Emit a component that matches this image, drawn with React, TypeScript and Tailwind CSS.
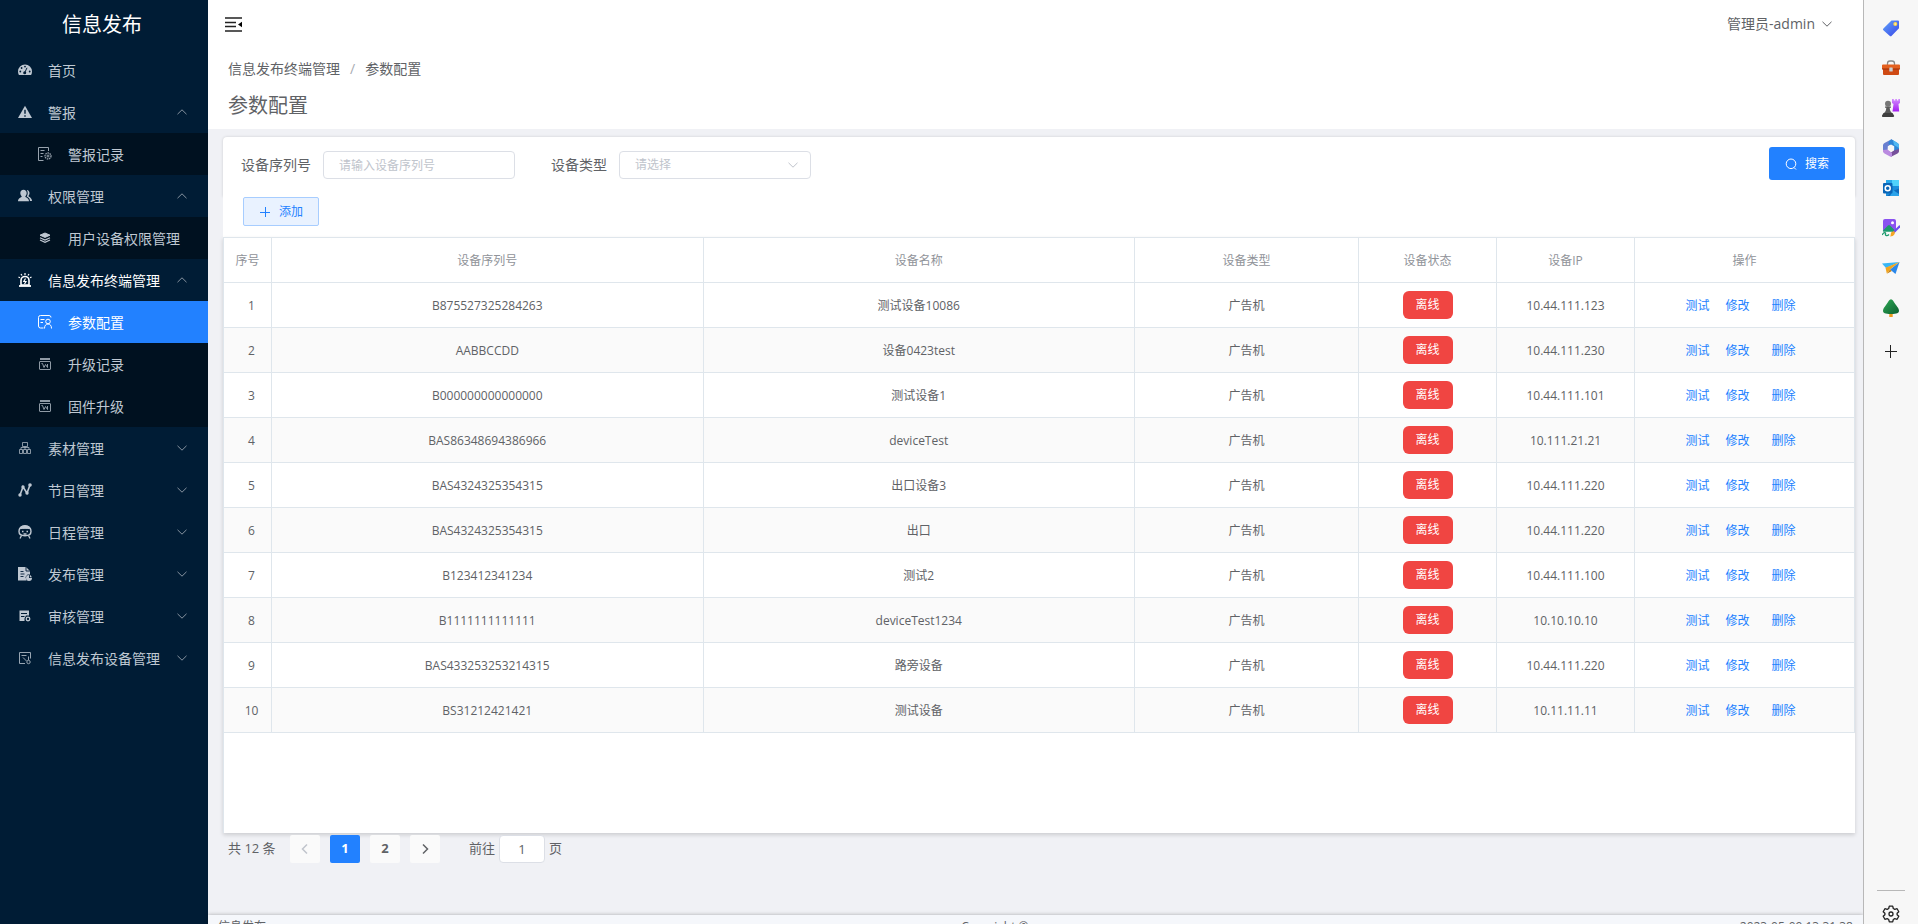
import { useState } from 'react'
import type { ReactNode } from 'react'

type SubItem = { label: string; icon: ReactNode; active?: boolean }
type MenuItem = { label: string; icon: ReactNode; active?: boolean; open?: boolean; leaf?: boolean; children?: SubItem[] }

type Device = { sn: string; name: string; ip: string }

const devices: Device[] = [
  { sn: 'B875527325284263', name: '测试设备10086', ip: '10.44.111.123' },
  { sn: 'AABBCCDD', name: '设备0423test', ip: '10.44.111.230' },
  { sn: 'B000000000000000', name: '测试设备1', ip: '10.44.111.101' },
  { sn: 'BAS86348694386966', name: 'deviceTest', ip: '10.111.21.21' },
  { sn: 'BAS4324325354315', name: '出口设备3', ip: '10.44.111.220' },
  { sn: 'BAS4324325354315', name: '出口', ip: '10.44.111.220' },
  { sn: 'B123412341234', name: '测试2', ip: '10.44.111.100' },
  { sn: 'B1111111111111', name: 'deviceTest1234', ip: '10.10.10.10' },
  { sn: 'BAS433253253214315', name: '路旁设备', ip: '10.44.111.220' },
  { sn: 'BS31212421421', name: '测试设备', ip: '10.11.11.11' },
]

function Glyph({ children }: { children: ReactNode }) {
  return (
    <svg viewBox="0 0 14 14" className="size-3.5 shrink-0" fill="none" stroke="currentColor" aria-hidden="true">
      {children}
    </svg>
  )
}

function Chevron({ up, className }: { up?: boolean; className?: string }) {
  return (
    <svg viewBox="0 0 12 12" className={className} fill="none" stroke="currentColor" aria-hidden="true">
      <path d={up ? 'M1.5 8.2 6 3.8l4.5 4.4' : 'M1.5 3.8 6 8.2l4.5-4.4'} />
    </svg>
  )
}

const upgradeIcon = (
  <Glyph>
    <g opacity=".75">
      <path d="M2 2h10" strokeWidth="2" />
      <rect x="1.5" y="4.5" width="11" height="8" rx=".5" />
      <path d="M3.500 6.500h1l1.500 4 1.500-3 2 3V7" />
    </g>
  </Glyph>
)

const menu: MenuItem[] = [
  {
    label: '首页',
    leaf: true,
    icon: (
      <Glyph>
        <path d="M7 1.5a7 7 0 0 0-7 7c0 1.3.3 2.5.9 3.5h12.2a7 7 0 0 0 .9-3.5 7 7 0 0 0-7-7z" fill="currentColor" stroke="none" />
        <g fill="#001c35" stroke="none">
          <circle cx="2.3" cy="8.5" r=".9" />
          <circle cx="3.6" cy="5" r=".9" />
          <circle cx="7" cy="3.6" r=".9" />
          <circle cx="11.7" cy="8.5" r=".9" />
          <circle cx="6.7" cy="9.8" r="1.5" />
        </g>
        <path d="M6.8 9.5 9 4.8" stroke="#001c35" />
      </Glyph>
    ),
  },
  {
    label: '警报',
    open: true,
    icon: (
      <Glyph>
        <path d="M7 .8 14 13H0z" fill="currentColor" stroke="none" />
        <path d="M7 4.8v4M7 10.2v1.5" stroke="#001c35" strokeWidth="1.4" />
      </Glyph>
    ),
    children: [
      {
        label: '警报记录',
        icon: (
          <Glyph>
            <g opacity=".8">
              <path d="M5.5 13.500H.5V.5h10v3.500M2.5 3.500h4M2.5 6.500h3M2.5 9.500h2" />
              <circle cx="10" cy="9" r="3" strokeDasharray="1.5 .7" strokeWidth="1.3" />
              <circle cx="10" cy="9" r="1" />
            </g>
          </Glyph>
        ),
      },
    ],
  },
  {
    label: '权限管理',
    open: true,
    icon: (
      <Glyph>
        <g fill="currentColor" stroke="none">
          <path d="M5.5.7c2 0 3.200 1.400 3.200 3.300 0 1.500-.7 2.700-1.500 3.400.2 1 3.800 1.300 3.800 4.900H0c0-3.600 3.600-3.900 3.800-4.900C3 6.700 2.300 5.500 2.300 4 2.300 2.100 3.500.7 5.500.7z" />
          <path d="M8.800.9c1.700.1 2.700 1.400 2.700 3.100 0 1.300-.5 2.300-1.200 3 .4 1 3.700 1.600 3.700 5h-2c0-2.800-1.800-3.700-3.300-4.500 1.300-2 1.400-4.800.1-6.600z" />
        </g>
      </Glyph>
    ),
    children: [
      {
        label: '用户设备权限管理',
        icon: (
          <Glyph>
            <path d="M7 2l5 2.200-5 2.200-5-2.200z" fill="currentColor" />
            <path d="M2 6.700l5 2.300 5-2.300M2 9l5 2.300L12 9" strokeWidth="1.2" />
          </Glyph>
        ),
      },
    ],
  },
  {
    label: '信息发布终端管理',
    open: true,
    active: true,
    icon: (
      <Glyph>
        <path d="M1 13h12" strokeWidth="1.8" />
        <path d="M3 12V7.500a4 4 0 0 1 8 0V12z" strokeWidth="1.6" />
        <path d="M7.500 5.500 5.800 8.500H8l-1.500 2.500M7 0v2M3 1l1 1.500M11 1l-1 1.500M.5 4l1.500.8M13.500 4l-1.500.8" strokeWidth="1.2" />
      </Glyph>
    ),
    children: [
      {
        label: '参数配置',
        active: true,
        icon: (
          <Glyph>
            <path d="M5.5 13h-3a2 2 0 0 1-2-2V2.500a2 2 0 0 1 2-2H11a2 2 0 0 1 2 2M2.500 4.500h4M2.500 7.500H5" />
            <circle cx="10" cy="6.500" r="2.300" />
            <path d="M6.500 13.500c0-3 1.500-4.500 3.500-4.500s3.500 1.500 3.500 4.500" />
          </Glyph>
        ),
      },
      { label: '升级记录', icon: upgradeIcon },
      { label: '固件升级', icon: upgradeIcon },
    ],
  },
  {
    label: '素材管理',
    icon: (
      <Glyph>
        <g opacity=".7">
          <path d="M4.500 1.500h5v4h-5zM1.500 8.500h3v4h-3zM5.500 8.500h3v4h-3zM9.500 8.500h3v4h-3zM7 5.500v3M3 8.500v-2h8v2" />
        </g>
      </Glyph>
    ),
  },
  {
    label: '节目管理',
    icon: (
      <Glyph>
        <path d="M2 12 5 4l4 6 3-8" strokeWidth="1.6" />
        <g fill="currentColor" stroke="none">
          <circle cx="2" cy="12" r="1.700" />
          <circle cx="5" cy="4" r="1.700" />
          <circle cx="9" cy="10" r="1.700" />
          <circle cx="12" cy="2" r="1.800" />
        </g>
      </Glyph>
    ),
  },
  {
    label: '日程管理',
    icon: (
      <Glyph>
        <path d="M1 6.500C1 3 3.500.8 7 .8s6 2.200 6 5.700c0 2.500-2 4.200-6 4.200S1 9 1 6.500z" strokeWidth="1.400" />
        <path d="M1.500 3.800C2.500 1.500 4.500 1 7 1s4.500.5 5.500 2.800c-3-.6-8-.6-11 0z" fill="currentColor" />
        <path d="M4 6.500h1.500M8.500 6.500H10M5.500 9h3M3.500 10.500l-1.500 3M10.500 10.500l1.500 3" strokeWidth="1.300" />
      </Glyph>
    ),
  },
  {
    label: '发布管理',
    icon: (
      <Glyph>
        <path d="M0 0h8l4 4v3.500H9.500L7.500 10l1 3.500H0z" fill="currentColor" stroke="none" />
        <path d="M2.500 4.500h3M2.500 7h4M2.500 9.500h3M8 0v4h4" stroke="#001c35" strokeWidth=".9" />
        <path d="M11 8v3h3a3 3 0 1 1-3-3z" fill="currentColor" stroke="none" />
        <path d="M11.800 7.500v2.700H14z" fill="currentColor" stroke="none" />
      </Glyph>
    ),
  },
  {
    label: '审核管理',
    icon: (
      <Glyph>
        <path d="M1.500 1.500H11v5H8L6.500 9.500V12h-5z" fill="currentColor" stroke="none" />
        <path d="M3 4.500h6M3 7.500h3.500" stroke="#001c35" />
        <circle cx="10" cy="10" r="1.800" strokeWidth="1.300" />
      </Glyph>
    ),
  },
  {
    label: '信息发布设备管理',
    icon: (
      <Glyph>
        <g opacity=".8">
          <path d="M7 12.500H1.500v-11h11v6M3.500 4.500h5M5 6.500 8.500 10" />
          <circle cx="10.500" cy="11" r="1.700" />
          <path d="M10.500 9V5.500" />
        </g>
      </Glyph>
    ),
  },
]

function Sidebar() {
  return (
    <aside className="w-52 shrink-0 bg-[#001c35] text-[#bfc8d2]">
      <div className="flex h-[49px] items-center justify-center pt-px pr-1 text-xl text-white">信息发布</div>
      <nav>
        <ul>
          {menu.map((item) => (
            <li key={item.label}>
              <a
                href="#"
                className={`flex h-[42px] items-center pr-5 pl-[18px] text-sm ${item.active ? 'text-white' : ''}`}
              >
                {item.icon}
                <span className="flex-1 pt-px pl-4">{item.label}</span>
                {!item.leaf && <Chevron up={item.open} className="mb-px size-3 text-[#8793a0]" />}
              </a>
              {item.children && (
                <ul className="bg-[#001120]">
                  {item.children.map((sub) => (
                    <li key={sub.label}>
                      <a
                        href="#"
                        className={`flex h-[42px] items-center pl-[38px] text-sm ${
                          sub.active ? 'bg-[#2281ff] text-white' : ''
                        }`}
                      >
                        {sub.icon}
                        <span className="pt-px pl-4">{sub.label}</span>
                      </a>
                    </li>
                  ))}
                </ul>
              )}
            </li>
          ))}
        </ul>
      </nav>
    </aside>
  )
}

function TopBar() {
  return (
    <header className="bg-white">
      <div className="flex h-12 items-center justify-between pr-[30px] pl-[17px]">
        <button aria-label="收起菜单">
          <svg viewBox="0 0 17 15" className="h-[15px] w-[17px] text-[#222]" stroke="currentColor" aria-hidden="true">
            <path d="M0 1h17M0 5.500h11M0 9.500h11M0 14h17" strokeWidth="1.500" />
            <path d="M17 4.800v5.400l-4-2.700z" fill="#000" stroke="none" />
          </svg>
        </button>
        <button className="flex items-center gap-1.5 text-sm text-[#606266]">
          管理员-admin
          <Chevron className="size-3" />
        </button>
      </div>
      <div className="h-[81px] pt-2.5 pl-5 text-[#606266]">
        <nav className="flex gap-2.5 text-sm leading-[22px]" aria-label="breadcrumb">
          <a href="#">信息发布终端管理</a>
          <span className="text-[#a8abb2]">/</span>
          <span>参数配置</span>
        </nav>
        <h1 className="mt-3 text-xl leading-7">参数配置</h1>
      </div>
    </header>
  )
}

function SearchForm() {
  const [sn, setSn] = useState('')

  return (
    <form className="flex h-[60px] justify-between rounded-t-sm bg-white pt-2.5 pr-2.5 pl-[18px] shadow-[0_0_3px_rgba(0,0,0,0.15)]">
      <div className="flex h-9 items-center text-sm text-[#606266]">
        <label htmlFor="sn">设备序列号</label>
        <input
          id="sn"
          value={sn}
          onChange={(e) => setSn(e.target.value)}
          placeholder="请输入设备序列号"
          className="ml-3 h-7 w-48 rounded border border-[#dcdfe6] px-[15px] text-xs outline-none placeholder:text-[#c0c4cc]"
        />
        <label htmlFor="type" className="ml-9">
          设备类型
        </label>
        <div className="relative ml-3">
          <select
            id="type"
            className="block h-7 w-48 appearance-none rounded border border-[#dcdfe6] bg-white px-[15px] text-xs text-[#c0c4cc] outline-none"
          >
            <option>请选择</option>
          </select>
          <Chevron className="pointer-events-none absolute top-2 right-3 size-3 text-[#c0c4cc]" />
        </div>
      </div>
      <button
        type="button"
        className="flex h-[33px] w-[76px] items-center justify-center gap-2 rounded-[3px] bg-[#2281ff] text-xs text-white"
      >
        <svg viewBox="0 0 12 12" className="size-3" fill="none" stroke="currentColor" aria-hidden="true">
          <circle cx="6" cy="5.800" r="4.800" />
          <path d="M9 9.500l2 2" />
        </svg>
        搜索
      </button>
    </form>
  )
}

const thClass = 'border-r border-b border-[#dfe6ec] pt-px font-normal'
const tdClass = 'border-r border-b border-[#dfe6ec] pt-px'

function DeviceTable() {
  return (
    <div className="h-[calc(100vh-328px)] border-t border-l border-[#dfe6ec] bg-white shadow-[0_2px_4px_rgba(0,0,0,0.15)]">
      <table className="w-full table-fixed border-separate border-spacing-0 text-center text-xs text-[#606266]">
        <colgroup>
          <col className="w-12" />
          <col />
          <col />
          <col className="w-56" />
          <col className="w-[138px]" />
          <col className="w-[138px]" />
          <col className="w-[220px]" />
        </colgroup>
        <thead className="text-[#909399]">
          <tr className="h-[45px]">
            <th className={thClass}>序号</th>
            <th className={thClass}>设备序列号</th>
            <th className={thClass}>设备名称</th>
            <th className={thClass}>设备类型</th>
            <th className={thClass}>设备状态</th>
            <th className={thClass}>设备IP</th>
            <th className={thClass}>操作</th>
          </tr>
        </thead>
        <tbody>
          {devices.map((d, idx) => (
            <tr key={idx} className="h-[45px] even:bg-[#fafafa]">
              <td className={`${tdClass} pl-2`}>{idx + 1}</td>
              <td className={tdClass}>{d.sn}</td>
              <td className={tdClass}>{d.name}</td>
              <td className={tdClass}>广告机</td>
              <td className="border-r border-b border-[#dfe6ec]">
                <span className="inline-block h-7 w-[50px] rounded-md bg-[#f04542] align-middle leading-7 text-white">
                  离线
                </span>
              </td>
              <td className={tdClass}>{d.ip}</td>
              <td className={`${tdClass} pr-2 text-[#2281ff]`}>
                <button>测试</button>
                <button className="ml-4">修改</button>
                <button className="ml-[22px]">删除</button>
              </td>
            </tr>
          ))}
        </tbody>
      </table>
    </div>
  )
}

function Pagination() {
  return (
    <div className="mt-0.5 flex h-7 items-center pl-[5px] text-[13px] text-[#606266]">
      <span className="w-[62px]">共 12 条</span>
      <div className="flex gap-2.5 font-bold">
        <button aria-label="上一页" disabled className="flex h-7 w-[30px] items-center justify-center rounded-xs bg-[#fafafa] text-[#c0c4cc]">
          <svg viewBox="0 0 12 12" className="size-3" fill="none" stroke="currentColor" strokeWidth="1.5">
            <path d="M8 1.500 3.500 6 8 10.500" />
          </svg>
        </button>
        <button className="h-7 w-[30px] rounded-xs bg-[#2281ff] text-white">1</button>
        <button className="h-7 w-[30px] rounded-xs bg-[#fafafa]">2</button>
        <button aria-label="下一页" className="flex h-7 w-[30px] items-center justify-center rounded-xs bg-[#fafafa]">
          <svg viewBox="0 0 12 12" className="size-3" fill="none" stroke="currentColor" strokeWidth="1.5">
            <path d="M4 1.500 8.500 6 4 10.500" />
          </svg>
        </button>
      </div>
      <label htmlFor="page" className="ml-[29px]">
        前往
      </label>
      <input
        id="page"
        defaultValue="1"
        className="mx-1 h-7 w-[46px] rounded border border-[#dcdfe6] bg-white text-center outline-none"
      />
      <span>页</span>
    </div>
  )
}

// Right-hand strip of browser shortcuts
const shortcuts: { name: string; icon: ReactNode }[] = [
  {
    name: 'Shopping',
    icon: (
      <>
        <path d="M9.500 1.500H16a1 1 0 0 1 1 1v6.800l-7.300 7.400a1.500 1.500 0 0 1-2.100 0l-6.200-5.400a1.300 1.300 0 0 1 0-1.900z" fill="url(#tag)" />
        <circle cx="13.300" cy="5" r="2" fill="#ffd84d" />
        <circle cx="13.300" cy="5" r=".8" fill="#fff3c0" />
      </>
    ),
  },
  {
    name: 'Tools',
    icon: (
      <>
        <path d="M5.500 6V4.500A2.500 2.500 0 0 1 8 2h2a2.500 2.500 0 0 1 2.500 2.500V6" fill="none" stroke="#888" strokeWidth="1.300" />
        <path d="M1 10h16v5a1 1 0 0 1-1 1H2a1 1 0 0 1-1-1z" fill="#cf4a14" />
        <path d="M0 6.500a1 1 0 0 1 1-1h16a1 1 0 0 1 1 1V10H0z" fill="#e4601f" />
        <path d="M0 9.500h18v1H0z" fill="#9c2d08" />
        <rect x="7.300" y="8.500" width="3.400" height="4" rx=".6" fill="#c9cfd1" />
      </>
    ),
  },
  {
    name: 'Games',
    icon: (
      <>
        <path d="M10 0h1.800v1.600h1.500V0h1.600v1.600h1.400V0H18v4l-1.500 1 .7 7.500h-6.700l1-7.500L10 4z" fill="url(#rook)" />
        <circle cx="6" cy="4.700" r="3" fill="#777" />
        <path d="M3 7.500h6v1.300H7.700c.2 2.500.8 4.200 2.300 5.200H2c1.500-1 2.100-2.700 2.300-5.200H3z" fill="#5a5a5a" />
        <path d="M1.500 14h9l1.500 2.500a1 1 0 0 1-1 1.500H1a1 1 0 0 1-1-1.500z" fill="#3f3f3f" />
      </>
    ),
  },
  {
    name: 'Microsoft 365',
    icon: (
      <>
        <path d="M9.500.3 2.500 4A2.500 2.500 0 0 0 1 6.300v6L5.500 15 6 7.500 11.500 4z" fill="#6a7fd0" />
        <path d="M9.500.3 15.500 4A2.500 2.500 0 0 1 17 6.300v6L12 14V8L6.500 5C6.500 3 7.500 1.300 9.500.3z" fill="#2f86d6" />
        <path d="M11 1.200 15.500 4A2.500 2.500 0 0 1 17 6.300V9l-5-3z" fill="#4fb8f2" />
        <path d="M17 10v2.300a2.500 2.500 0 0 1-1.500 2.200L9 17.800 8 14l4-2.500z" fill="#77509a" />
        <path d="M1 11l5-.5 4 3.500v3.500a2 2 0 0 1-2 0l-5.500-3A2.500 2.500 0 0 1 1 12.300z" fill="#ba8be0" />
        <path d="M9 5.500 12.200 7.300v3.500L9 12.700l-3.200-1.900V7.300z" fill="#f7f7f7" />
      </>
    ),
  },
  {
    name: 'Outlook',
    icon: (
      <>
        <path d="M4 1h13v16H4z" fill="#1b8fdc" />
        <path d="M10 1h7v6h-7z" fill="#4fd3fb" />
        <path d="M4 1h6v6H4z" fill="#28a8ea" />
        <path d="M17 9.500V17H5l6-5z" fill="#0f6cbd" />
        <path d="M11 11l6 4v2H8z" fill="#2ba3ea" />
        <rect x="1" y="4" width="9.500" height="10.500" rx="1" fill="#0a66b8" />
        <circle cx="5.700" cy="9.200" r="2.500" fill="none" stroke="#fff" strokeWidth="1.500" />
      </>
    ),
  },
  {
    name: 'Image Creator',
    icon: (
      <>
        <rect x="1" y="0" width="13" height="13" rx="2" fill="#8a52f0" />
        <circle cx="10.500" cy="3.800" r="1.500" fill="#fff" />
        <path d="M1 11.500l5-5a1.500 1.500 0 0 1 2 0l5 5-1 1.500H2a1 1 0 0 1-1-1.500z" fill="#1c9a6c" />
        <path d="M0 12.700h10L7 18H0z" fill="#f7f7f7" />
        <path d="M0 16c2-3 4-3 3.500-1s2 2 3.500.5" fill="none" stroke="#1c9a6c" strokeWidth="1.300" />
        <path d="M17.500 7.500 12 13" stroke="#6a4df0" strokeWidth="2.200" strokeLinecap="round" />
        <path d="M12.500 12.500c1 1.500 0 5-4.500 5 1-1 .5-2 1-3.500.5-1.300 2.500-2.300 3.500-1.500z" fill="#f5a623" />
      </>
    ),
  },
  {
    name: 'Drop',
    icon: (
      <>
        <path d="M0 4.500 17.500 3 4 9z" fill="#38b6f5" />
        <path d="M17.500 3 13.500 15 8 10.500z" fill="#2a87ea" />
        <path d="M3.500 8.700 17.500 3 8 10.500 4.800 14.500z" fill="#f2a51c" />
        <path d="M8 10.500l1.800 1.400-5 2.900z" fill="#c87f0d" />
      </>
    ),
  },
  {
    name: 'E-tree',
    icon: (
      <>
        <path d="M7.300 13h3.400v5H7.300z" fill="#ee9a1d" />
        <path d="M9 .3c1.500 0 3 3 5 5.700 1.800 2.400 3 4 3 5.700C17 14 15 15 9 15s-8-1-8-3.300C1 10 2.200 8.400 4 6 6 3.300 7.500.3 9 .3z" fill="url(#tree)" />
      </>
    ),
  },
]

function ShortcutStrip() {
  return (
    <aside className="flex w-[55px] shrink-0 flex-col items-center border-l border-[#b8b8b8] bg-[#f7f7f7] pt-[19px]">
      <svg className="absolute size-0" aria-hidden="true">
        <defs>
          <linearGradient id="tag" x1="0" y1="0" x2="1" y2="1">
            <stop offset="0" stopColor="#5fa4fa" />
            <stop offset="1" stopColor="#3a46e8" />
          </linearGradient>
          <linearGradient id="rook" x1="0" y1="0" x2="0" y2="1">
            <stop offset="0" stopColor="#d28bff" />
            <stop offset="1" stopColor="#a21cf0" />
          </linearGradient>
          <linearGradient id="tree" x1="0" y1="0" x2="1" y2="1">
            <stop offset="0" stopColor="#2eaa55" />
            <stop offset="1" stopColor="#0d5f30" />
          </linearGradient>
        </defs>
      </svg>
      <div className="flex flex-col gap-[22px]">
        {shortcuts.map((s) => (
          <button key={s.name} aria-label={s.name}>
            <svg viewBox="0 0 18 18" className="block size-[18px]" aria-hidden="true">
              {s.icon}
            </svg>
          </button>
        ))}
        <button aria-label="Add" className="mt-[3px]">
          <svg viewBox="0 0 18 18" className="block size-[18px]" stroke="#222" aria-hidden="true">
            <path d="M3 9.500h12M8.500 3v13" />
          </svg>
        </button>
      </div>
      <div className="mt-auto border-t border-[#b8b8b8] px-[5px] pt-3.5 pb-px">
        <button aria-label="Settings" className="block">
          <svg viewBox="0 0 18 18" className="block size-[18px]" fill="none" stroke="#222" strokeWidth="1.3" aria-hidden="true">
            <path
              d="M7.300 1.200h3.400l.6 2.300 1.500.9 2.300-.7 1.700 3-1.700 1.600v1.400l1.700 1.600-1.700 3-2.300-.7-1.500.9-.6 2.300H7.300l-.6-2.300-1.500-.9-2.300.7-1.700-3 1.700-1.600V8.300L1.200 6.700l1.700-3 2.300.7 1.500-.9z"
              strokeLinejoin="round"
            />
            <circle cx="9" cy="9" r="2" />
          </svg>
        </button>
      </div>
    </aside>
  )
}

export default function App() {
  return (
    <div className="flex h-screen overflow-hidden bg-[#f0f1f5] font-['Open_Sans','Noto_Sans_CJK_SC',sans-serif]">
      <Sidebar />
      <div className="min-w-0 flex-1">
        <TopBar />
        <main className="mt-2 mr-2 ml-[15px]">
          <SearchForm />
          <div className="h-10 bg-white pl-5">
            <button className="flex h-[29px] w-[76px] items-center justify-center gap-2 rounded-xs border border-[#a7cdff] bg-[#e9f2ff] text-xs text-[#2281ff]">
              <svg viewBox="0 0 12 12" className="size-3" stroke="currentColor" aria-hidden="true">
                <path d="M1 6.500h10M6.500 1v10" />
              </svg>
              添加
            </button>
          </div>
          <DeviceTable />
          <Pagination />
        </main>
        <footer className="mt-[52px] flex h-6 items-center justify-between bg-[#f5f7fb] px-2.5 text-xs text-[#606266] shadow-[0_0_4px_rgba(0,0,0,0.3)]">
          <span>信息发布</span>
          <span className="pr-4">Copyright ©</span>
          <span>2023-05-09 13:31:38</span>
        </footer>
      </div>
      <ShortcutStrip />
    </div>
  )
}
